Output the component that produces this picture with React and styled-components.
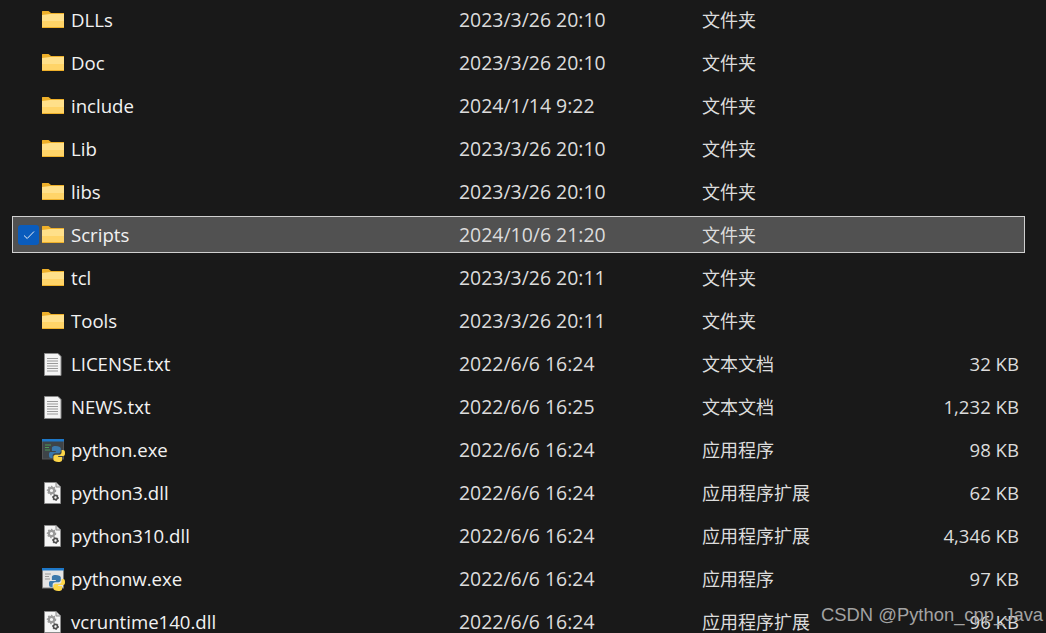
import React from 'react';
import styled, { createGlobalStyle } from 'styled-components';

const GlobalStyle = createGlobalStyle`
	html, body {
		margin: 0;
		background: #191919;
	}
	#root {
		height: 633px;
		overflow: hidden;
	}
`

const Page = styled.div`
	position: relative;
	width: 1046px;
	height: 633px;
	overflow: hidden;
	background: #191919;
	color: #e6e6e6;
	font-family: "Open Sans", "Noto Sans CJK SC", sans-serif;
	font-size: 18.6px;
`

const List = styled.div`
	display: flex;
	flex-direction: column;
	gap: 6px;
	padding: 1px 21px 0 12px;
`

const Row = styled.div`
	flex: none;
	display: grid;
	grid-template-columns: 29px 29px 388px 243px 1fr auto;
	align-items: center;
	height: 37px;
	box-sizing: border-box;
	padding: 0 5px 0 0;
	border: 1px solid ${p => (p.$selected ? '#d0d0d0' : 'transparent')};
	background: ${p => (p.$selected ? '#515151' : 'transparent')};
`

const CheckCell = styled.div`
	display: flex;
	padding-left: 5px;
`

const Check = styled.div`
	width: 21px;
	height: 20px;
	border-radius: 3px;
	background: #0a5cbd;
	display: flex;
	align-items: center;
	justify-content: center;
`

const IconCell = styled.div`
	display: flex;
	align-items: center;
	height: 24px;
`

const Name = styled.span`
	white-space: nowrap;
	color: #f2f2f2;
`

const DateText = styled.span`
	white-space: nowrap;
	font-size: 19.45px;
	color: #dcdcdc;
`

const TypeText = styled.span`
	white-space: nowrap;
	font-family: "Noto Sans CJK SC", sans-serif;
	font-size: 18px;
	padding-bottom: 2px;
	color: #dcdcdc;
`

const Size = styled.span`
	white-space: nowrap;
	text-align: right;
	color: #dcdcdc;
`

const Watermark = styled.div`
	position: absolute;
	left: 821px;
	top: 603px;
	font-family: "Liberation Sans", sans-serif;
	font-size: 18.4px;
	line-height: 24px;
	color: #a3a3a3;
	white-space: nowrap;
`

const FolderIcon = () => (
	<svg width="24" height="24" viewBox="0 0 24 24">
		<path d="M0 3.5 Q0 3 .5 3 H6.5 l2.5 2 H22 V20 H0z" fill="#eeb02a" />
		<path d="M0 7 L8 6 H22 V19 H0z" fill="#ffe08a" />
		<path d="M0 13 H22 V19 H0z" fill="#ffd468" />
	</svg>
)

const TextIcon = () => (
	<svg width="24" height="24" viewBox="0 0 24 24">
		<path d="M2.5 1.5 H16 l3 3 V23.5 H2.5z" fill="#f4f4f4" stroke="#8a8a8a" />
		<path d="M5 6.5 h11 M5 9 h11 M5 11.5 h11 M5 14 h11 M5 16.5 h11 M5 19 h11" stroke="#9a9a9a" strokeWidth="1" />
	</svg>
)

const Gear = ({ x, y, r, color }) => (
	<g>
		<circle cx={x} cy={y} r={r} fill="none" stroke={color} strokeWidth={r * 0.8} />
		<circle cx={x} cy={y} r={r * 1.5} fill="none" stroke={color} strokeWidth={r * 0.5} strokeDasharray="1.6 1.4" />
	</g>
)

const DllIcon = () => (
	<svg width="24" height="24" viewBox="0 0 24 24">
		<path d="M2.5 1.5 H14 l4.5 4.5 V22.5 H2.5z" fill="#f6f6f6" stroke="#8c8c8c" />
		<path d="M14 1.5 v4.5 h4.5" fill="#d8d8d8" stroke="#8c8c8c" />
		<Gear x={9.5} y={9.5} r={2.7} color="#9a9a9a" />
		<Gear x={13.5} y={16.5} r={2} color="#4c4c4c" />
	</svg>
)

const PythonLogo = () => (
	<g>
		<path d="M13.5 8 c-3.2 0 -3.6 1.2 -3.6 2.5 V13 h3.9 v1 H8.6 C7 14 7 15.4 7 17 c0 1.8 .4 3 2 3 h1.6 v-2.2 c0 -1.5 1 -2.6 2.6 -2.6 h3.4 c1.2 0 2.2 -1 2.2 -2.2 v-2.5 C18.8 9 16.6 8 13.5 8z" fill="#3a78ac" />
		<path d="M16.5 24 c3.2 0 3.6 -1.2 3.6 -2.5 V19 h-3.9 v-1 h5 c1.6 0 1.8 -1.4 1.8 -3 c0 -1.8 -.4 -3 -2 -3 h-1.4 v2.2 c0 1.5 -1 2.6 -2.6 2.6 h-3.4 c-1.2 0 -2.2 1 -2.2 2.2 v2.5 c0 1.5 2.2 2.5 5 2.5z" fill="#fdd648" />
	</g>
)

const ExeIcon = ({ light }) => (
	<svg width="24" height="24" viewBox="0 0 24 24">
		<rect x="0.5" y="2" width="21" height="19" fill={light ? '#e4e4e4' : '#3e4448'} stroke={light ? '#7a7a7a' : '#555'} />
		<rect x="0" y="1" width="22" height="2.5" fill="#1e78c8" />
		<path d="M3 7 h6 M3 9.5 h4 M3 12 h5" stroke={light ? '#9a9a9a' : '#4f9a58'} strokeWidth="1" />
		<PythonLogo />
	</svg>
)

const icons = {
	folder: <FolderIcon />,
	text: <TextIcon />,
	dll: <DllIcon />,
	exe: <ExeIcon />,
	exew: <ExeIcon light />,
}

const files = [
	{ name: 'DLLs', date: '2023/3/26 20:10', type: '文件夹', icon: 'folder' },
	{ name: 'Doc', date: '2023/3/26 20:10', type: '文件夹', icon: 'folder' },
	{ name: 'include', date: '2024/1/14 9:22', type: '文件夹', icon: 'folder' },
	{ name: 'Lib', date: '2023/3/26 20:10', type: '文件夹', icon: 'folder' },
	{ name: 'libs', date: '2023/3/26 20:10', type: '文件夹', icon: 'folder' },
	{ name: 'Scripts', date: '2024/10/6 21:20', type: '文件夹', icon: 'folder', selected: true },
	{ name: 'tcl', date: '2023/3/26 20:11', type: '文件夹', icon: 'folder' },
	{ name: 'Tools', date: '2023/3/26 20:11', type: '文件夹', icon: 'folder' },
	{ name: 'LICENSE.txt', date: '2022/6/6 16:24', type: '文本文档', size: '32 KB', icon: 'text' },
	{ name: 'NEWS.txt', date: '2022/6/6 16:25', type: '文本文档', size: '1,232 KB', icon: 'text' },
	{ name: 'python.exe', date: '2022/6/6 16:24', type: '应用程序', size: '98 KB', icon: 'exe' },
	{ name: 'python3.dll', date: '2022/6/6 16:24', type: '应用程序扩展', size: '62 KB', icon: 'dll' },
	{ name: 'python310.dll', date: '2022/6/6 16:24', type: '应用程序扩展', size: '4,346 KB', icon: 'dll' },
	{ name: 'pythonw.exe', date: '2022/6/6 16:24', type: '应用程序', size: '97 KB', icon: 'exew' },
	{ name: 'vcruntime140.dll', date: '2022/6/6 16:24', type: '应用程序扩展', size: '96 KB', icon: 'dll' },
]

export default function App() {
	return (
		<Page>
			<GlobalStyle />
			<List>
				{files.map(file => (
					<Row key={file.name} $selected={file.selected}>
						<CheckCell>
							{file.selected && (
								<Check>
									<svg width="12" height="10" viewBox="0 0 12 10">
										<path d="M1 5.5 L4.2 8.5 L11 1.5" fill="none" stroke="#e8eef6" strokeWidth="1" />
									</svg>
								</Check>
							)}
						</CheckCell>
						<IconCell>{icons[file.icon]}</IconCell>
						<Name>{file.name}</Name>
						<DateText>{file.date}</DateText>
						<TypeText>{file.type}</TypeText>
						<Size>{file.size}</Size>
					</Row>
				))}
			</List>
			<Watermark>CSDN @Python_cpp_Java</Watermark>
		</Page>
	)
}
